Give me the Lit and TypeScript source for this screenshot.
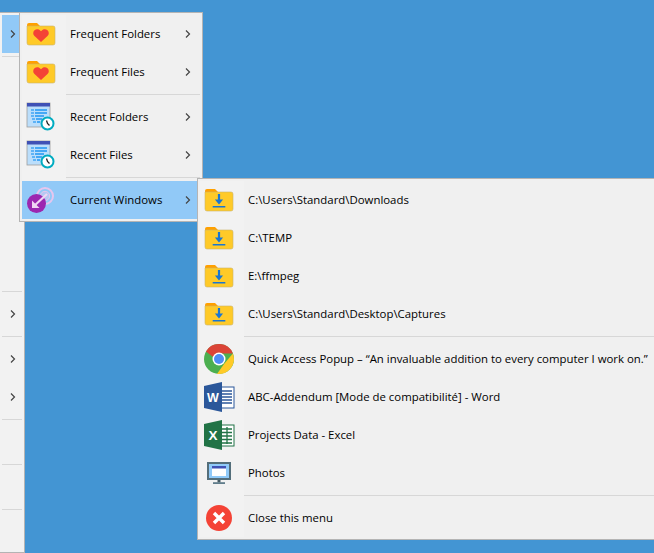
import { LitElement, html, css, svg } from "lit";
import { customElement } from "lit/decorators.js";

const folder = (inner: unknown) => svg`
  <path d="M2 7a2 2 0 0 1 2-2h8l3 3h-13z" fill="#ffa000"/>
  <path d="M2 8h26a2 2 0 0 1 2 2v15a2 2 0 0 1-2 2H4a2 2 0 0 1-2-2z" fill="#ffca28" stroke="#c9b26a" stroke-width=".6"/>
  ${inner}`;

const heart = folder(svg`<path d="M16 24l-6.500-6a3.800 3.800 0 0 1 0-5.700c1.900-1.600 4.700-1.300 6.500 1 1.800-2.300 4.600-2.600 6.500-1a3.800 3.800 0 0 1 0 5.700z" fill="#f44336"/>`);
const download = folder(svg`<path d="M14.900 10h2.200v5.500h3L16 20.500l-4.100-5h3z" fill="#1976d2"/><rect x="9.700" y="22" width="12.600" height="1.500" fill="#1976d2"/>`);
const recent = svg`
  <rect x="2" y="2" width="23" height="24" fill="#bbdefb" stroke="#9e9e9e" stroke-width=".8"/>
  <rect x="2" y="2" width="23" height="3.500" fill="#3f51b5"/>
  <path d="M6 9h3M6 12h3M6 15h3M7 18h3M8 21h3" stroke="#42a5f5" stroke-width="1.500"/>
  <path d="M10 9h12M10 12h12M10 15h9M11 18h6M12 21h3" stroke="#2196f3" stroke-width="1.500"/>
  <circle cx="22.500" cy="22.500" r="6" fill="#fff" stroke="#00acc1" stroke-width="2"/>
  <path d="M21.500 19.500l1 3 2 2" fill="none" stroke="#222" stroke-width="1.300"/>`;
const windows = svg`
  <circle cx="20" cy="12" r="8" fill="#91c9f7" stroke="#e6c6ee" stroke-width="2"/>
  <circle cx="20" cy="12" r="4.700" fill="#b5c8f2" stroke="#e6c6ee" stroke-width="1"/>
  <circle cx="11.500" cy="19.500" r="9.500" fill="#9c27b0"/>
  <path d="M22 10L8.500 22.500" stroke="#f0d5f3" stroke-width="2.200"/>
  <path d="M7 16.500V24h7.500z" fill="#f0d5f3"/>`;
const chrome = svg`
  <circle cx="16" cy="16" r="15" fill="#4caf50"/>
  <path d="M3 8.500A15 15 0 0 1 29.900 10.500H16a6 6 0 0 0-5.600 3.800z" fill="#db4437"/>
  <path d="M29.900 10.500A15 15 0 0 1 14 30.900l7-10z" fill="#ffca28"/>
  <circle cx="16" cy="16" r="6.500" fill="#fff"/>
  <circle cx="16" cy="16" r="5" fill="#4d8df6"/>`;
const word = svg`
  <rect x="17" y="6" width="14" height="21" fill="#fff" stroke="#2b579a" stroke-width="1"/>
  <path d="M19 10h10M19 13h10M19 16h10M19 19h10M19 22h10" stroke="#2b579a" stroke-width="1.300"/>
  <path d="M1 5L19 1v30L1 27z" fill="#2b579a"/>
  <text x="10" y="21" text-anchor="middle" font-family="Liberation Sans" font-weight="700" font-size="12.500" fill="#fff">W</text>`;
const excel = svg`
  <rect x="17" y="6" width="14" height="21" fill="#fff" stroke="#217346" stroke-width="1"/>
  <path d="M19 10h10M19 13.500h10M19 17h10M19 20.500h10M19 24h10M24 8v17" stroke="#217346" stroke-width="1.300"/>
  <path d="M1 5L19 1v30L1 27z" fill="#217346"/>
  <text x="10" y="21" text-anchor="middle" font-family="Liberation Sans" font-weight="700" font-size="13.500" fill="#fff">X</text>`;
const photos = svg`
  <rect x="4" y="5" width="24" height="18" fill="#546e7a"/>
  <rect x="6" y="7" width="20" height="14" fill="#90caf9"/>
  <rect x="9" y="9" width="14" height="10" fill="#fff"/>
  <rect x="9" y="9" width="14" height="2.500" fill="#3f51b5"/>
  <rect x="14.500" y="23" width="3" height="2.500" fill="#455a64"/>
  <rect x="10" y="25.200" width="12" height="1.800" fill="#607d8b"/>`;
const close = svg`
  <circle cx="16" cy="16" r="13" fill="#f44336"/>
  <path d="M11 11l10 10M21 11L11 21" stroke="#fff" stroke-width="3.400"/>`;

type Item = "sep" | { icon?: unknown; label?: string; sub?: boolean; active?: boolean };

const left: Item[] = [
  { sub: true, active: true }, "sep", {}, {}, {}, {}, {}, {}, "sep",
  { sub: true }, "sep", { sub: true }, { sub: true }, "sep", {}, "sep", {}, "sep", {},
];
const middle: Item[] = [
  { icon: heart, label: "Frequent Folders", sub: true },
  { icon: heart, label: "Frequent Files", sub: true },
  "sep",
  { icon: recent, label: "Recent Folders", sub: true },
  { icon: recent, label: "Recent Files", sub: true },
  "sep",
  { icon: windows, label: "Current Windows", sub: true, active: true },
];
const right: Item[] = [
  { icon: download, label: "C:\\Users\\Standard\\Downloads" },
  { icon: download, label: "C:\\TEMP" },
  { icon: download, label: "E:\\ffmpeg" },
  { icon: download, label: "C:\\Users\\Standard\\Desktop\\Captures" },
  "sep",
  { icon: chrome, label: "Quick Access Popup – “An invaluable addition to every computer I work on.”" },
  { icon: word, label: "ABC-Addendum [Mode de compatibilité] - Word" },
  { icon: excel, label: "Projects Data - Excel" },
  { icon: photos, label: "Photos" },
  "sep",
  { icon: close, label: "Close this menu" },
];

const chevron = svg`<svg class="chev" width="6" height="10" viewBox="0 0 6 10"><path d="M1 1.500l3.500 3.500-3.500 3.500" fill="none" stroke="#444" stroke-width="1.200"/></svg>`;

@customElement("app-root")
export class AppRoot extends LitElement {
  static styles = css`
    :host {
      display: block;
      position: relative;
      width: 654px;
      height: 553px;
      overflow: hidden;
      background: #4395d3;
      font-family: "Open Sans", "Noto Sans", sans-serif;
      font-size: 11.4px;
      color: #000;
    }
    .menu {
      position: absolute;
      box-sizing: border-box;
      display: flex;
      flex-direction: column;
      padding: 2px;
      background: #f0f0f0;
      border: 1px solid #b4b4b4;
    }
    .left { left: -1px; top: 12px; width: 26px; height: 541px; background: #f2f2f2; }
    .middle { left: 19px; top: 12px; width: 184px; height: 210px; }
    .right { left: 197px; top: 178px; width: 480px; height: 362px; padding-left: 2px; }
    .row { display: flex; align-items: center; height: 38px; flex: none; position: relative; }
    .row.active { background: #91c9f7; }
    .gutter {
      width: 44px;
      height: 100%;
      flex: none;
      box-sizing: border-box;
      padding-left: 3px;
      display: flex;
      align-items: center;
      background: #f2f2f2;
    }
    .row.active .gutter { background: transparent; }
    .label { padding: 0 0 2px 4px; white-space: nowrap; flex: 1; }
    .chev { flex: none; margin-right: 9px; }
    .left .chev { position: absolute; left: 8px; }
    .sep { height: 7px; flex: none; display: flex; }
    .sep .g { width: 44px; background: #f2f2f2; }
    .sep .l { flex: 1; height: 1px; margin-top: 3px; background: #d7d7d7; }
    .left .sep .g { display: none; }
    svg.icon { display: block; }
  `;

  private renderMenu(cls: string, items: Item[]) {
    return html`<div class="menu ${cls}">
      ${items.map((it) =>
        it === "sep"
          ? html`<div class="sep"><div class="g"></div><div class="l"></div></div>`
          : html`<div class="row ${it.active ? "active" : ""}">
              ${it.label
                ? html`<div class="gutter"><svg class="icon" width="32" height="32" viewBox="0 0 32 32">${it.icon}</svg></div>
                    <div class="label">${it.label}</div>`
                : ""}
              ${it.sub ? chevron : ""}
            </div>`
      )}
    </div>`;
  }

  render() {
    return html`
      ${this.renderMenu("left", left)}
      ${this.renderMenu("middle", middle)}
      ${this.renderMenu("right", right)}
    `;
  }
}
